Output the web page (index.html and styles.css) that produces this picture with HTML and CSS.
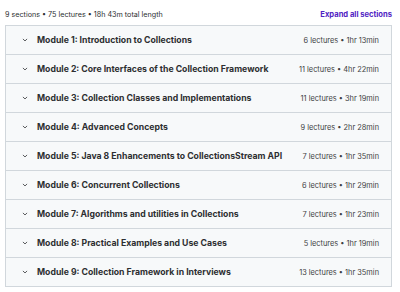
FILE: index.html
```html
<!DOCTYPE html>
<html>
<head>
<meta charset="utf-8">
<link rel="stylesheet" href="styles.css">
</head>
<body>
<div class="page">
  <div class="topbar">
    <span class="summary">9 sections • 75 lectures • 18h 43m total length</span>
    <span class="expand">Expand all sections</span>
  </div>
  <div class="sections">
    <div class="row"><svg class="chev" viewBox="0 0 10 6"><path d="M1.5 1.2 L5 4.6 L8.5 1.2"/></svg><span class="title">Module 1: Introduction to Collections</span><span class="meta">6 lectures • 1hr 13min</span></div>
    <div class="row"><svg class="chev" viewBox="0 0 10 6"><path d="M1.5 1.2 L5 4.6 L8.5 1.2"/></svg><span class="title">Module 2: Core Interfaces of the Collection Framework</span><span class="meta">11 lectures • 4hr 22min</span></div>
    <div class="row"><svg class="chev" viewBox="0 0 10 6"><path d="M1.5 1.2 L5 4.6 L8.5 1.2"/></svg><span class="title">Module 3: Collection Classes and Implementations</span><span class="meta">11 lectures • 3hr 19min</span></div>
    <div class="row"><svg class="chev" viewBox="0 0 10 6"><path d="M1.5 1.2 L5 4.6 L8.5 1.2"/></svg><span class="title">Module 4: Advanced Concepts</span><span class="meta">9 lectures • 2hr 28min</span></div>
    <div class="row"><svg class="chev" viewBox="0 0 10 6"><path d="M1.5 1.2 L5 4.6 L8.5 1.2"/></svg><span class="title">Module 5: Java 8 Enhancements to CollectionsStream API</span><span class="meta">7 lectures • 1hr 35min</span></div>
    <div class="row"><svg class="chev" viewBox="0 0 10 6"><path d="M1.5 1.2 L5 4.6 L8.5 1.2"/></svg><span class="title">Module 6: Concurrent Collections</span><span class="meta">6 lectures • 1hr 29min</span></div>
    <div class="row"><svg class="chev" viewBox="0 0 10 6"><path d="M1.5 1.2 L5 4.6 L8.5 1.2"/></svg><span class="title">Module 7: Algorithms and utilities in Collections</span><span class="meta">7 lectures • 1hr 23min</span></div>
    <div class="row"><svg class="chev" viewBox="0 0 10 6"><path d="M1.5 1.2 L5 4.6 L8.5 1.2"/></svg><span class="title">Module 8: Practical Examples and Use Cases</span><span class="meta">5 lectures • 1hr 19min</span></div>
    <div class="row"><svg class="chev" viewBox="0 0 10 6"><path d="M1.5 1.2 L5 4.6 L8.5 1.2"/></svg><span class="title">Module 9: Collection Framework in Interviews</span><span class="meta">13 lectures • 1hr 35min</span></div>
  </div>
</div>
</body>
</html>
```
FILE: styles.css
```css
html, body {
  margin: 0;
  padding: 0;
  background: #ffffff;
}
body {
  font-family: "Inter", "Liberation Sans", sans-serif;
  color: #2d2f31;
}
.page {
  width: 387px;
  padding: 0 8px 0 5px;
}
.topbar {
  display: flex;
  justify-content: space-between;
  align-items: center;
  height: 25px;
  padding-top: 3px;
  box-sizing: border-box;
}
.summary {
  font-size: 7.2px;
  color: #2d2f31;
}
.expand {
  font-size: 7.6px;
  font-weight: 700;
  color: #5022c3;
}
.sections {
  border: 1px solid #d1d7dc;
  border-bottom: none;
}
.row {
  display: flex;
  align-items: center;
  height: 28px;
  background: #f7f9fa;
  border-bottom: 1px solid #d1d7dc;
  padding: 0 12px 0 16px;
}
.chev {
  width: 6px;
  height: 4px;
  flex: none;
  fill: none;
  stroke: #2d2f31;
  stroke-width: 1.3;
  margin-right: 9px;
}
.title {
  font-size: 8.7px;
  font-weight: 700;
  flex: 1;
}
.meta {
  font-size: 7.4px;
  color: #3e4143;
}
```
